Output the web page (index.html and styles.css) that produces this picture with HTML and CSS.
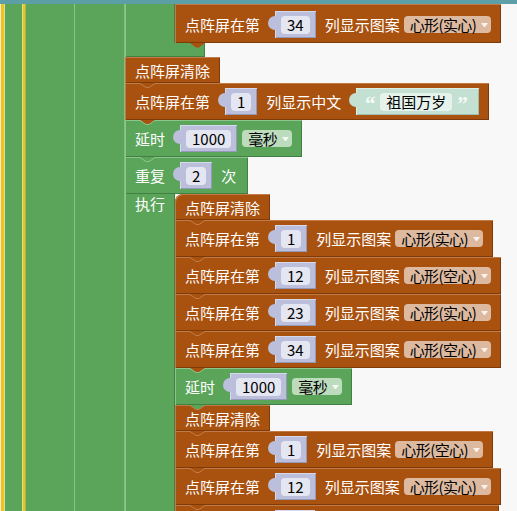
FILE: index.html
```html
<!DOCTYPE html>
<html lang="zh">
<head>
<meta charset="utf-8">
<title>点阵屏</title>
<link rel="stylesheet" href="styles.css">
</head>
<body>
<div class="topbar"></div>
<div class="ws">
  <div class="gutter"></div>
  <div class="main">

    <!-- tail of the enclosing repeat block -->
    <div class="ctail">
      <div class="cbody">
        <div class="arm"></div>
        <div class="stack">
          <div class="blk brown row tall">
            <span class="lbl">点阵屏在第</span>
            <span class="val"><span class="fld">34</span></span>
            <span class="lbl">列显示图案</span>
            <span class="dd">心形(实心)<i class="arr"></i></span>
            <svg class="nub" width="16" height="6" viewBox="0 0 16 6"><path class="f" d="M0 0L6 4.5L9 4.5L15 0Z"/></svg>
          </div>
        </div>
      </div>
      <div class="cfoot"></div>
    </div>

    <div class="blk brown clear">
      <span class="lbl">点阵屏清除</span>
      <svg class="nub" width="16" height="6" viewBox="0 0 16 6"><path class="f" d="M0 0L6 4.5L9 4.5L15 0Z"/><path class="h" d="M0 0.5L6 4.5L9 4.5L15 0.5"/></svg>
    </div>

    <div class="blk brown row">
      <span class="lbl">点阵屏在第</span>
      <span class="val"><span class="fld">1</span></span>
      <span class="lbl">列显示中文</span>
      <span class="str"><span class="q">“</span><span class="fld sfld">祖国万岁</span><span class="q">”</span></span>
      <svg class="nub" width="16" height="6" viewBox="0 0 16 6"><path class="f" d="M0 0L6 4.5L9 4.5L15 0Z"/><path class="h gh" d="M0 0.5L6 4.5L9 4.5L15 0.5"/></svg>
    </div>

    <div class="blk green row">
      <span class="lbl">延时</span>
      <span class="val"><span class="fld">1000</span></span>
      <span class="dd dd-g">毫秒<i class="arr"></i></span>
      <svg class="nub" width="16" height="6" viewBox="0 0 16 6"><path class="f" d="M0 0L6 4.5L9 4.5L15 0Z"/><path class="h" d="M0 0.5L6 4.5L9 4.5L15 0.5"/></svg>
    </div>

    <!-- repeat 2 times -->
    <div class="cblk">
      <div class="blk green row wide-end">
        <span class="lbl">重复</span>
        <span class="val"><span class="fld">2</span></span>
        <span class="lbl">次</span>
      </div>
      <div class="cbody">
        <div class="arm"><span class="armlbl">执行</span></div>
        <div class="stack">

          <div class="blk brown clear first">
            <span class="lbl">点阵屏清除</span>
            <svg class="nub" width="16" height="6" viewBox="0 0 16 6"><path class="f" d="M0 0L6 4.5L9 4.5L15 0Z"/><path class="h" d="M0 0.5L6 4.5L9 4.5L15 0.5"/></svg>
          </div>

          <div class="blk brown row">
            <span class="lbl">点阵屏在第</span>
            <span class="val"><span class="fld">1</span></span>
            <span class="lbl">列显示图案</span>
            <span class="dd">心形(实心)<i class="arr"></i></span>
            <svg class="nub" width="16" height="6" viewBox="0 0 16 6"><path class="f" d="M0 0L6 4.5L9 4.5L15 0Z"/><path class="h" d="M0 0.5L6 4.5L9 4.5L15 0.5"/></svg>
          </div>

          <div class="blk brown row">
            <span class="lbl">点阵屏在第</span>
            <span class="val"><span class="fld">12</span></span>
            <span class="lbl">列显示图案</span>
            <span class="dd">心形(空心)<i class="arr"></i></span>
            <svg class="nub" width="16" height="6" viewBox="0 0 16 6"><path class="f" d="M0 0L6 4.5L9 4.5L15 0Z"/><path class="h" d="M0 0.5L6 4.5L9 4.5L15 0.5"/></svg>
          </div>

          <div class="blk brown row">
            <span class="lbl">点阵屏在第</span>
            <span class="val"><span class="fld">23</span></span>
            <span class="lbl">列显示图案</span>
            <span class="dd">心形(实心)<i class="arr"></i></span>
            <svg class="nub" width="16" height="6" viewBox="0 0 16 6"><path class="f" d="M0 0L6 4.5L9 4.5L15 0Z"/><path class="h" d="M0 0.5L6 4.5L9 4.5L15 0.5"/></svg>
          </div>

          <div class="blk brown row">
            <span class="lbl">点阵屏在第</span>
            <span class="val"><span class="fld">34</span></span>
            <span class="lbl">列显示图案</span>
            <span class="dd">心形(空心)<i class="arr"></i></span>
            <svg class="nub" width="16" height="6" viewBox="0 0 16 6"><path class="f" d="M0 0L6 4.5L9 4.5L15 0Z"/><path class="h gh" d="M0 0.5L6 4.5L9 4.5L15 0.5"/></svg>
          </div>

          <div class="blk green row">
            <span class="lbl">延时</span>
            <span class="val"><span class="fld">1000</span></span>
            <span class="dd dd-g">毫秒<i class="arr"></i></span>
            <svg class="nub" width="16" height="6" viewBox="0 0 16 6"><path class="f" d="M0 0L6 4.5L9 4.5L15 0Z"/><path class="h bh" d="M0 0.5L6 4.5L9 4.5L15 0.5"/></svg>
          </div>

          <div class="blk brown clear">
            <span class="lbl">点阵屏清除</span>
            <svg class="nub" width="16" height="6" viewBox="0 0 16 6"><path class="f" d="M0 0L6 4.5L9 4.5L15 0Z"/><path class="h" d="M0 0.5L6 4.5L9 4.5L15 0.5"/></svg>
          </div>

          <div class="blk brown row">
            <span class="lbl">点阵屏在第</span>
            <span class="val"><span class="fld">1</span></span>
            <span class="lbl">列显示图案</span>
            <span class="dd">心形(空心)<i class="arr"></i></span>
            <svg class="nub" width="16" height="6" viewBox="0 0 16 6"><path class="f" d="M0 0L6 4.5L9 4.5L15 0Z"/><path class="h" d="M0 0.5L6 4.5L9 4.5L15 0.5"/></svg>
          </div>

          <div class="blk brown row">
            <span class="lbl">点阵屏在第</span>
            <span class="val"><span class="fld">12</span></span>
            <span class="lbl">列显示图案</span>
            <span class="dd">心形(实心)<i class="arr"></i></span>
            <svg class="nub" width="16" height="6" viewBox="0 0 16 6"><path class="f" d="M0 0L6 4.5L9 4.5L15 0Z"/><path class="h" d="M0 0.5L6 4.5L9 4.5L15 0.5"/></svg>
          </div>

          <!-- next block, only its top edge shows -->
          <div class="blk brown row stub">
            <span class="val stubval"></span>
          </div>

        </div>
      </div>
    </div>

  </div>
</div>
</body>
</html>
```
FILE: styles.css
```css
* { box-sizing: border-box; }

html, body {
  margin: 0;
  height: 100%;
}

body {
  background: #f8f8f8;
  overflow: hidden;
  font-family: "Noto Sans CJK SC", "Noto Sans", sans-serif;
  font-size: 15px;
  line-height: 1;
}

.topbar {
  height: 4px;
  background: #5c9fa6;
  position: relative;
  z-index: 5;
}

.ws {
  display: flex;
  height: 507px;
  overflow: hidden;
}

/* enclosing statement gutters of the outer blocks */
.gutter {
  width: 125px;
  flex: none;
  background: linear-gradient(to right,
    #f7efd4 0 1px,
    #f1c11d 1px 4px,
    #e3d99a 4px 5px,
    #5ba55b 5px 22px,
    #e8dc8a 22px 23px,
    #efc31e 23px 25px,
    #a8b84e 25px 26px,
    #5ba55b 26px 74px,
    #8ac28a 74px 75px,
    #5ba55b 75px 124px,
    #86bd86 124px 125px);
}

.main {
  display: flex;
  flex-direction: column;
  align-items: flex-start;
}

.main > *, .stack > *, .cblk > *, .ctail > * { flex: none; }

/* ---------- blocks ---------- */
.blk {
  position: relative;
  display: flex;
  align-items: center;
  width: max-content;
  color: #fff;
  white-space: nowrap;
}

.brown {
  background: #a9510f;
  box-shadow: inset 1px 1px 0 #c27a47, inset -1px -1px 0 #7e3a09;
}
.brown .nub { color: #a9510f; }

.green {
  background: #5ba55b;
  box-shadow: inset 1px 1px 0 #8cc48c, inset -1px -1px 0 #428042;
}
.green .nub { color: #5ba55b; }

.row {
  height: 37px;
  padding: 0 10px;
}

.row.wide-end { padding-right: 12px; }

.row.tall {
  height: 39px;
  padding-top: 2px;
}

.row.stub {
  width: 324px;
  padding-left: 100px;
}

.clear {
  height: 26px;
  padding: 0 10px;
}

.first { border-top-left-radius: 8px; }

.lbl { display: block; }

/* spacing between the inline parts of a block row */
.lbl + .val, .lbl + .str { margin-left: 15px; }
.val + .lbl { margin-left: 9px; }
.lbl + .dd { margin-left: 4px; }
.val + .dd { margin-left: 5px; }

/* connection tab hanging under a block */
.nub {
  position: absolute;
  left: 15px;
  top: 100%;
  z-index: 2;
  overflow: visible;
}
.nub .f { fill: currentColor; }
.nub .h { fill: none; stroke: #c27a47; stroke-width: 1; }
.nub .h.gh { stroke: #8cc48c; }
.green .nub .h { stroke: #8cc48c; }
.green .nub .h.bh { stroke: #c27a47; }

/* number input block */
.val {
  position: relative;
  display: flex;
  align-items: center;
  height: 27px;
  padding: 0 6px;
  background: #bbbfdc;
  box-shadow: inset 1px 1px 0 #d6d9ec, inset -1px -1px 0 #9599b9;
}
.val::before {
  content: "";
  position: absolute;
  left: -7px;
  top: 5px;
  width: 8px;
  height: 14px;
  background: #bbbfdc;
  border-radius: 7px 0 0 7px;
}
.stubval { width: 40px; }

.fld {
  display: flex;
  align-items: center;
  justify-content: center;
  height: 18px;
  min-width: 20px;
  padding: 0 6px;
  background: #e4e6f1;
  border-radius: 4px;
  color: #000;
}

/* text input block */
.str {
  position: relative;
  display: flex;
  align-items: center;
  height: 27px;
  padding: 0 11px 0 8px;
  gap: 4px;
  background: #c3e0d3;
  box-shadow: inset 1px 1px 0 #dcefe6, inset -1px -1px 0 #9fbfb1;
}
.str::before {
  content: "";
  position: absolute;
  left: -7px;
  top: 5px;
  width: 8px;
  height: 14px;
  background: #c3e0d3;
  border-radius: 7px 0 0 7px;
}
.q {
  display: block;
  width: 12px;
  text-align: center;
  font-family: "Liberation Serif", serif;
  font-weight: bold;
  font-size: 21px;
  color: #f6fbf8;
  height: 18px;
  line-height: 22px;
}
.sfld { background: #e6f2ec; }

/* dropdown fields */
.dd {
  display: flex;
  align-items: center;
  gap: 5px;
  height: 17px;
  padding: 0 2px 0 6px;
  border-radius: 4px;
  background: #dcb99f;
  color: #000;
  letter-spacing: -0.6px;
}
.dd-g { background: #bddbbd; }
.arr {
  display: block;
  width: 7px;
  height: 0;
  margin-right: 1px;
  border-left: 3.5px solid transparent;
  border-right: 3.5px solid transparent;
  border-top: 4px solid #fbf3ec;
}
.dd-g .arr { border-top-color: #f4faf4; }

/* C-shaped statement blocks */
.ctail, .cblk {
  display: flex;
  flex-direction: column;
  align-items: flex-start;
}

.cbody { display: flex; }

.arm {
  width: 50px;
  flex: none;
  background: #5ba55b;
  box-shadow: inset 1px 0 0 #8cc48c, inset -1px 0 0 #428042;
}

.armlbl {
  display: block;
  height: 20px;
  line-height: 20px;
  padding-left: 10px;
  color: #fff;
}

.stack {
  display: flex;
  flex-direction: column;
  align-items: flex-start;
}

.cfoot {
  width: 80px;
  height: 14px;
  background: #5ba55b;
  box-shadow: inset 1px 0 0 #8cc48c, inset -1px -1px 0 #428042;
}
```
